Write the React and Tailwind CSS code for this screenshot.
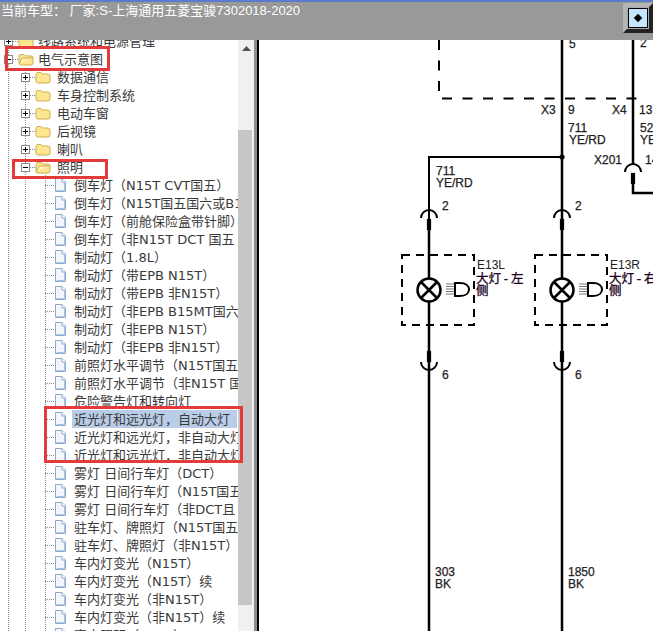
import React from 'react';

const treeFont = '[font-family:"DejaVu_Sans","Noto_Sans_CJK_SC",sans-serif]';
const headFont = '[font-family:"Liberation_Sans","Noto_Sans_CJK_SC",sans-serif]';

const folders = ['数据通信', '车身控制系统', '电动车窗', '后视镜', '喇叭'];

const leaves = [
    '倒车灯（N15T CVT国五）',
    '倒车灯（N15T国五国六或B15',
    '倒车灯（前舱保险盒带针脚）',
    '倒车灯（非N15T DCT 国五',
    '制动灯（1.8L）',
    '制动灯（带EPB N15T）',
    '制动灯（带EPB 非N15T）',
    '制动灯（非EPB B15MT国六',
    '制动灯（非EPB N15T）',
    '制动灯（非EPB 非N15T）',
    '前照灯水平调节（N15T国五',
    '前照灯水平调节（非N15T 国',
    '危险警告灯和转向灯',
    '近光灯和远光灯，自动大灯',
    '近光灯和远光灯，非自动大灯',
    '近光灯和远光灯，非自动大灯',
    '雾灯 日间行车灯（DCT）',
    '雾灯 日间行车灯（N15T国五',
    '雾灯 日间行车灯（非DCT且',
    '驻车灯、牌照灯（N15T国五',
    '驻车灯、牌照灯（非N15T）',
    '车内灯变光（N15T）',
    '车内灯变光（N15T）续',
    '车内灯变光（非N15T）',
    '车内灯变光（非N15T）续',
    '室内照明（N15T）',
];

const Toggle = ({ open }) => (
    <svg width="9" height="9" viewBox="0 0 9 9" className="shrink-0 relative">
        <rect x="0.5" y="0.5" width="8" height="8" fill="#fff" stroke="#8a8a8a" />
        <path d={open ? 'M2 4.5h5' : 'M2 4.5h5M4.5 2v5'} stroke="#000" />
    </svg>
);

const Folder = ({ open }) => (
    <svg width="16" height="14" viewBox="0 0 16 14" className="shrink-0 relative">
        <path d="M1 4.500Q1 2.500 3 2.500h3l1.500 1.500h5.500q2 0 2 2v5q0 2-2 2H3q-2 0-2-2Z" fill="#fde68f" stroke="#cfae4f" />
        {open && <path d="M1.500 11.500 3.500 7q.5-1 1.500-1h10" fill="#fff3bd" stroke="#cfae4f" />}
    </svg>
);

const Leaf = () => (
    <svg width="13" height="14" viewBox="0 0 13 14" className="shrink-0 relative">
        <path d="M1.500.5h6.500l3.500 3.500v9.500h-10Z" fill="#f3f7fd" stroke="#8fa9c9" />
        <path d="M8 .5V4h3.500" fill="#fff" stroke="#8fa9c9" />
        <path d="M2.500 12.500h8M10.500 5v7" stroke="#a9c6ea" />
    </svg>
);

const HDots = ({ w, left = 0 }) => (
    <span className="shrink-0 h-0 border-t border-dotted border-[#888]" style={{ width: w, marginLeft: left }} />
);

const Row = ({ children }) => (
    <div className="h-[18px] flex items-center whitespace-nowrap text-[13px] leading-[17px] text-[#3a3a3a]">{children}</div>
);

const Tree = () => (
    <div className={`relative w-[238px] h-full overflow-hidden bg-white ${treeFont}`}>
        <div className="absolute left-[8px] top-0 bottom-0 border-l border-dotted border-[#888]" />
        <div className="absolute left-[25px] top-[28px] bottom-0 border-l border-dotted border-[#888]" />
        <div className="absolute left-[45px] top-[135px] bottom-0 border-l border-dotted border-[#888]" />
        <div className="-mt-[8px] relative">
            <Row>
                <span className="ml-[4px] flex"><Toggle /></span>
                <HDots w={5} />
                <Folder />
                <span className="ml-[4px] pt-[1px]">线路系统和电源管理</span>
            </Row>
            <Row>
                <span className="ml-[4px] flex"><Toggle open /></span>
                <HDots w={5} />
                <Folder open />
                <span className="ml-[4px] pt-[1px]">电气示意图</span>
            </Row>
            {folders.map((name) => (
                <Row key={name}>
                    <span className="ml-[21px] flex"><Toggle /></span>
                    <HDots w={5} />
                    <Folder />
                    <span className="ml-[6px] pt-[1px]">{name}</span>
                </Row>
            ))}
            <Row>
                <span className="ml-[21px] flex"><Toggle open /></span>
                <HDots w={5} />
                <Folder open />
                <span className="ml-[6px] pt-[1px]">照明</span>
            </Row>
            {leaves.map((name, i) => (
                <Row key={i}>
                    <HDots w={9} left={45} />
                    <Leaf />
                    <span className={i === 13 ? 'ml-[5px] pl-[2px] pr-[7px] pt-[1px] bg-[#b9cde8]' : 'ml-[7px] pt-[1px]'}>{name}</span>
                </Row>
            ))}
        </div>
    </div>
);

const Scrollbar = () => (
    <div className="w-[16px] h-full flex flex-col bg-[#f0f0f0]">
        <div className="h-[17px] flex items-center justify-center">
            <svg width="9" height="5" viewBox="0 0 9 5"><path d="M4.500 0 9 5H0Z" fill="#505050" /></svg>
        </div>
        <div className="h-[73px]" />
        <div className="h-[475px] w-[14px] bg-[#c6c6c6]" />
    </div>
);

// connector socket on a vertical wire, dir 1 = opening down, -1 = opening up
const Pin = ({ x, y, dir }) => (
    <g>
        <path
            d={dir === 1 ? `M${x - 8} ${y + 8}A8 8 0 0 1 ${x + 8} ${y + 8}` : `M${x - 8} ${y - 8}A8 8 0 0 0 ${x + 8} ${y - 8}`}
            fill="none"
            stroke="#000"
            strokeWidth="2"
        />
        <rect x={x - 2} y={dir === 1 ? y + 9 : y - 19} width="4" height="11" fill="#000" />
    </g>
);

const Lamp = ({ x, boxX, code, label }) => (
    <g>
        <rect x={boxX} y="255" width="72" height="70" fill="none" stroke="#000" strokeWidth="2" strokeDasharray="8 6" />
        <circle cx={x} cy="290" r="11.500" fill="#fff" stroke="#000" strokeWidth="2.500" />
        <path d={`M${x - 8} 282l16 16M${x + 8} 282l-16 16`} stroke="#000" strokeWidth="2.500" />
        <path d={`M${x + 17} 284h8M${x + 17} 286.500h8M${x + 17} 289h8M${x + 17} 291.500h8M${x + 17} 294h8`} stroke="#777" strokeWidth="1" />
        <path d={`M${x + 26} 283h5c6 0 9 3 9 6.500s-3 6.500-9 6.500h-5Z`} fill="#fff" stroke="#000" strokeWidth="2" />
        <text x={boxX + 75} y="269" fontSize="12" fill="#222" stroke="none" fontFamily="'Liberation Sans',sans-serif">{code}</text>
        <text x={boxX + 74} y="283" fontSize="12.500" fill="#200020" stroke="#200020" strokeWidth="0.3" fontFamily="'Noto Sans CJK SC',sans-serif">{label}</text>
        <text x={boxX + 74} y="295" fontSize="12.500" fill="#200020" stroke="#200020" strokeWidth="0.3" fontFamily="'Noto Sans CJK SC',sans-serif">侧</text>
    </g>
);

const Diagram = () => (
    <svg width="394" height="591" viewBox="259 40 394 591" className="block" fontFamily="'Liberation Sans',sans-serif" fontSize="12" fill="#222" stroke="#222" strokeWidth="0.25">
        <path d="M439 40v58.500h206" fill="none" stroke="#000" strokeWidth="2" strokeDasharray="10 10.500" />
        <path d="M562 40V631M633 40V164M633 184V193H653" fill="none" stroke="#000" strokeWidth="2.500" />
        <path d="M429 631V157H562" fill="none" stroke="#000" strokeWidth="2" />
        <path d="M429 225V631" fill="none" stroke="#000" strokeWidth="2.500" />
        <circle cx="562" cy="157" r="2.500" fill="#000" />
        <text x="569" y="48">5</text>
        <text x="640" y="47">2</text>
        <text x="541" y="114">X3</text>
        <text x="568" y="114">9</text>
        <text x="612" y="114">X4</text>
        <text x="639" y="114">13</text>
        <text x="568" y="132">711</text>
        <text x="569" y="144">YE/RD</text>
        <text x="640" y="132">52</text>
        <text x="640" y="144">YE</text>
        <text x="594" y="164">X201</text>
        <text x="645" y="164">14</text>
        <text x="436" y="175">711</text>
        <text x="436" y="187">YE/RD</text>
        <Pin x={633} y={164} dir={1} />
        <Pin x={429} y={210} dir={1} />
        <Pin x={562} y={210} dir={1} />
        <text x="442" y="210">2</text>
        <text x="575" y="210">2</text>
        <Lamp x={429} boxX={402} code="E13L" label="大灯 - 左" />
        <Lamp x={562} boxX={535} code="E13R" label="大灯 - 右" />
        <Pin x={429} y={370} dir={-1} />
        <Pin x={562} y={370} dir={-1} />
        <text x="442" y="379">6</text>
        <text x="575" y="379">6</text>
        <text x="435" y="576">303</text>
        <text x="435" y="588">BK</text>
        <text x="568" y="576">1850</text>
        <text x="568" y="588">BK</text>
    </svg>
);

export default function App() {
    return (
        <div className="relative w-[653px] h-[631px] overflow-hidden bg-white">
            <div className="h-[40px] bg-[#999999] border-t-2 border-[#5b7bd0] flex justify-between pl-[1px]">
                <div className={`text-[13px] leading-[17px] text-white whitespace-pre ${headFont}`}>
                    当前车型： 厂家:S-上海通用五菱宝骏7302018-2020
                </div>
                <button className="w-[30px] h-[30px] mt-[1px] bg-[#a8a8a8] border-[4px] border-t-[#b5b5b5] border-l-[#b5b5b5] border-r-[#222] border-b-[#222] flex items-center justify-center">
                    <span className="w-[20px] h-[20px] bg-[#c4e8fb] border border-black flex items-center justify-center">
                        <span className="w-[6px] h-[6px] bg-black rotate-45" />
                    </span>
                </button>
            </div>
            <div className="flex h-[591px]">
                <Tree />
                <Scrollbar />
                <div className="w-[3px] h-full bg-[#8c8c8c]" />
                <div className="w-[2px] h-full bg-black" />
                <Diagram />
            </div>
            <div className="absolute left-[5px] top-[46px] w-[105px] h-[25px] border-[3px] border-[#e53a3a]" />
            <div className="absolute left-[12px] top-[159px] w-[96px] h-[20px] border-[3px] border-[#e53a3a]" />
            <div className="absolute left-[44px] top-[406px] w-[199px] h-[57px] border-[3px] border-[#e53a3a]" />
        </div>
    );
}
